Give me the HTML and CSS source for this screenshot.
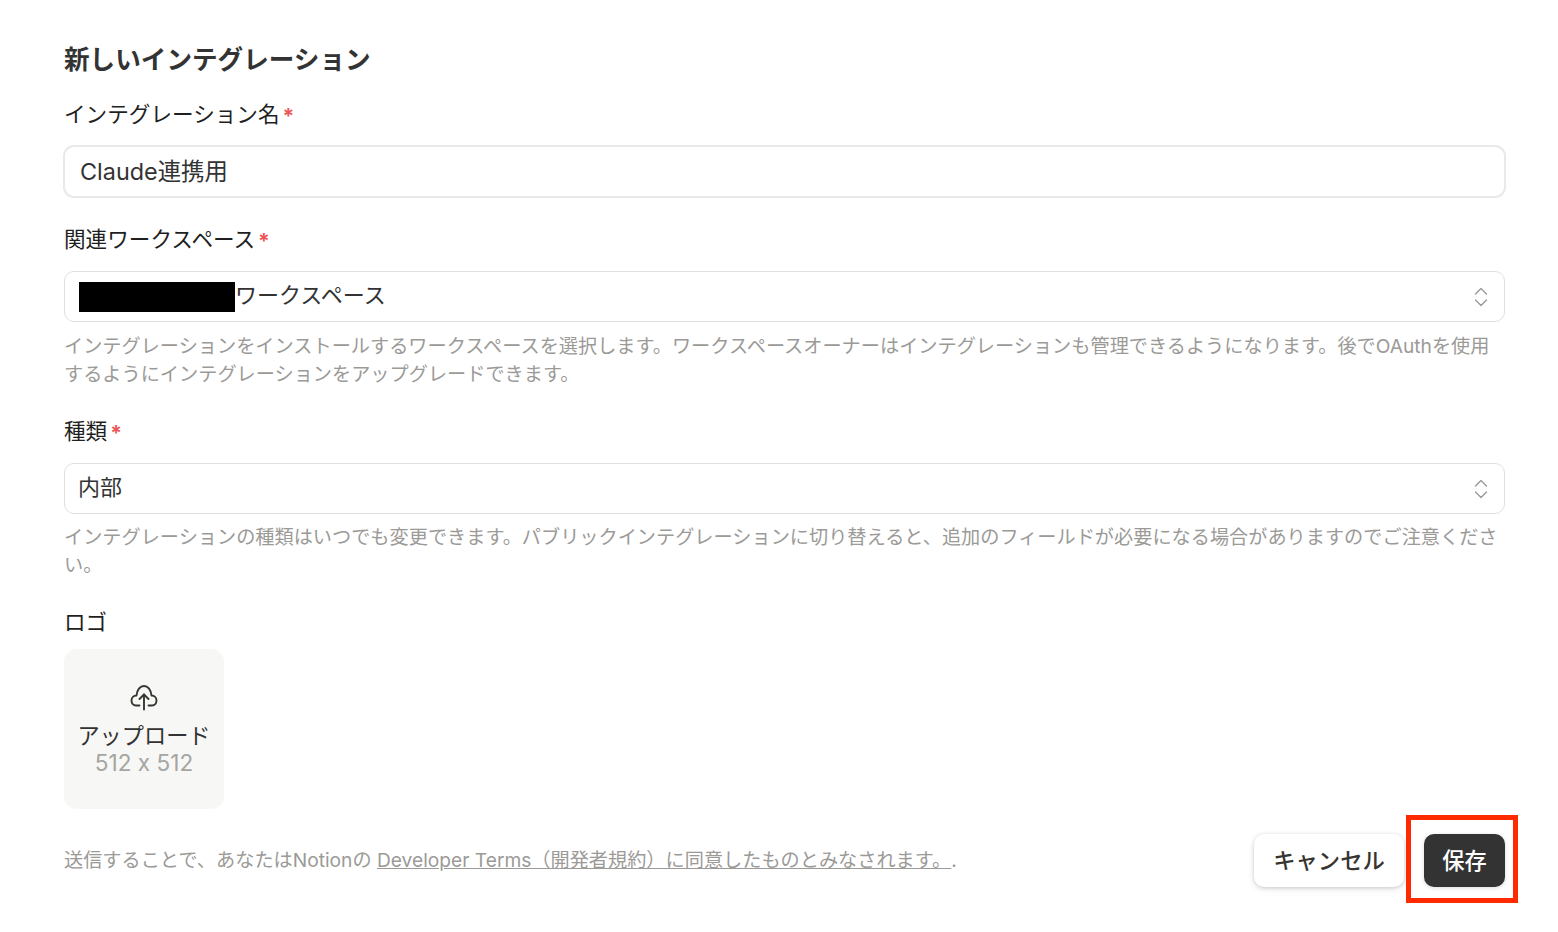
FILE: index.html
```html
<!DOCTYPE html>
<html lang="ja">
<head>
  <meta charset="UTF-8" />
  <meta name="viewport" content="width=device-width, initial-scale=1.0"/>
  <title>新しいインテグレーション</title>
  <link rel="stylesheet" href="styles.css">
</head>
<body>
  <form class="page">
    <h2 class="title">新しいインテグレーション</h2>

    <div class="field field-name">
      <div class="label">インテグレーション名<span class="req">*</span></div>
      <div class="input"><span class="input-text">Claude連携用</span></div>
    </div>

    <div class="field field-workspace">
      <div class="label">関連ワークスペース<span class="req">*</span></div>
      <div class="select">
        <span class="select-value"><span class="redacted"></span><span class="select-text">ワークスペース</span></span>
        <svg class="chevrons" width="16" height="22" viewBox="0 0 16 22" fill="none" stroke="#9b9a97" stroke-width="1.4" stroke-linecap="round" stroke-linejoin="round"><path d="M2.500 8 8 2.500 13.500 8"/><path d="M2.500 14 8 19.500 13.500 14"/></svg>
      </div>
      <p class="help">インテグレーションをインストールするワークスペースを選択します。ワークスペースオーナーはインテグレーションも管理できるようになります。後でOAuthを使用するようにインテグレーションをアップグレードできます。</p>
    </div>

    <div class="field field-type">
      <div class="label">種類<span class="req">*</span></div>
      <div class="select">
        <span class="select-value"><span class="select-text">内部</span></span>
        <svg class="chevrons" width="16" height="22" viewBox="0 0 16 22" fill="none" stroke="#9b9a97" stroke-width="1.4" stroke-linecap="round" stroke-linejoin="round"><path d="M2.500 8 8 2.500 13.500 8"/><path d="M2.500 14 8 19.500 13.500 14"/></svg>
      </div>
      <p class="help">インテグレーションの種類はいつでも変更できます。パブリックインテグレーションに切り替えると、追加のフィールドが必要になる場合がありますのでご注意ください。</p>
    </div>

    <div class="field field-logo">
      <div class="label">ロゴ</div>
      <div class="upload">
        <svg class="upload-icon" width="28" height="27" viewBox="0 0 28 27" fill="none" stroke="#37352f" stroke-width="1.9" stroke-linecap="round" stroke-linejoin="round"><path d="M9.500 21.500H6C3 21.500 1.500 19 1.500 16.500 1.500 13.500 3.700 11.500 6.500 11.500 7 6 10 2 14 2s7 4 7.500 9.500c2.800 0 5 2 5 5 0 2.500-1.500 5-4.500 5h-3.500"/><path d="M14 25.500V10.500"/><path d="M9.500 15 14 10.500 18.500 15"/></svg>
        <span class="upload-text">アップロード</span>
        <span class="upload-size">512 x 512</span>
      </div>
    </div>

    <div class="footer">
      <p class="terms">送信することで、あなたはNotionの <a href="#">Developer Terms（開発者規約）に同意したものとみなされます。</a>.</p>
      <div class="actions">
        <button type="button" class="btn btn-cancel">キャンセル</button>
        <button type="submit" class="btn btn-save">保存<span class="highlight"></span></button>
      </div>
    </div>
  </form>
</body>
</html>
```

FILE: styles.css
```css
* {
  box-sizing: border-box;
}

body {
  margin: 0;
  background: #fff;
  color: #37352f;
  font-family: Inter, "Noto Sans CJK JP", sans-serif;
  font-feature-settings: "calt" 0;
}

.page {
  width: 1558px;
  height: 932px;
  padding: 43px 53px 0 64px;
  overflow: hidden;
}

.title {
  margin: 0;
  font-size: 25.6px;
  line-height: 34px;
  font-weight: 700;
  color: #333;
}

.field-name {
  margin-top: 22px;
}

.field-workspace {
  margin-top: 26px;
}

.field-type {
  margin-top: 28px;
}

.field-logo {
  margin-top: 28px;
}

.label {
  font-size: 21.6px;
  line-height: 30px;
  color: #1f1f1f;
}

.req {
  margin-left: 3px;
  color: #eb5757;
  font-size: 21px;
  font-weight: 700;
  vertical-align: -2px;
  line-height: 1;
}

.input {
  margin: 16px -1px 0;
  height: 53px;
  padding: 0 15px;
  display: flex;
  align-items: center;
  border: 2px solid #e9e9e7;
  border-radius: 11px;
  font-size: 23.4px;
  color: #333;
}

.input-text {
  margin-bottom: 4px;
}

.select {
  margin-top: 17px;
  height: 51px;
  padding: 0 15px 0 14px;
  display: flex;
  align-items: center;
  justify-content: space-between;
  border: 1px solid #dfdfdd;
  border-radius: 10px;
  font-size: 22px;
  color: #333;
}

.select-value {
  display: flex;
  align-items: center;
}

.select-text {
  margin-bottom: 7px;
}

.field-type .select-text {
  margin-left: -1px;
}

.redacted {
  width: 156px;
  height: 30px;
  background: #000;
}

.help {
  margin: 10px 0 0;
  font-size: 19.18px;
  line-height: 28px;
  color: #9b9a97;
}

.field-type .help {
  margin-top: 9px;
}

.upload {
  margin-top: 12px;
  width: 160px;
  height: 160px;
  padding-top: 35px;
  display: flex;
  flex-direction: column;
  align-items: center;
  background: #f7f7f5;
  border-radius: 13px;
}

.upload-icon {
  margin-bottom: 10px;
}

.upload-text {
  font-size: 22.2px;
  line-height: 30px;
  color: #333;
}

.upload-size {
  margin-top: -1px;
  font-size: 22.6px;
  line-height: 25px;
  color: #a5a5a2;
}

.footer {
  margin-top: 25px;
  display: flex;
  align-items: center;
  justify-content: space-between;
}

.terms {
  margin: 0 0 3px;
  font-size: 19.18px;
  color: #9b9a97;
}

.terms a {
  color: inherit;
}

.actions {
  display: flex;
  align-items: center;
  gap: 20px;
}

.btn {
  position: relative;
  height: 53px;
  padding: 0 0 3px;
  border: none;
  border-radius: 10px;
  font-family: inherit;
  font-size: 22.3px;
  font-weight: 500;
}

.btn-cancel {
  width: 150px;
  background: #fff;
  color: #37352f;
  box-shadow: 0 1px 4px rgba(0, 0, 0, 0.18), 0 3px 10px rgba(0, 0, 0, 0.05);
}

.btn-save {
  width: 81px;
  background: #333;
  color: #fff;
  box-shadow: 0 1px 4px rgba(0, 0, 0, 0.15);
}

.highlight {
  position: absolute;
  top: -19px;
  left: -18px;
  width: 112px;
  height: 88px;
  border: 5px solid #ff2a00;
}
```
